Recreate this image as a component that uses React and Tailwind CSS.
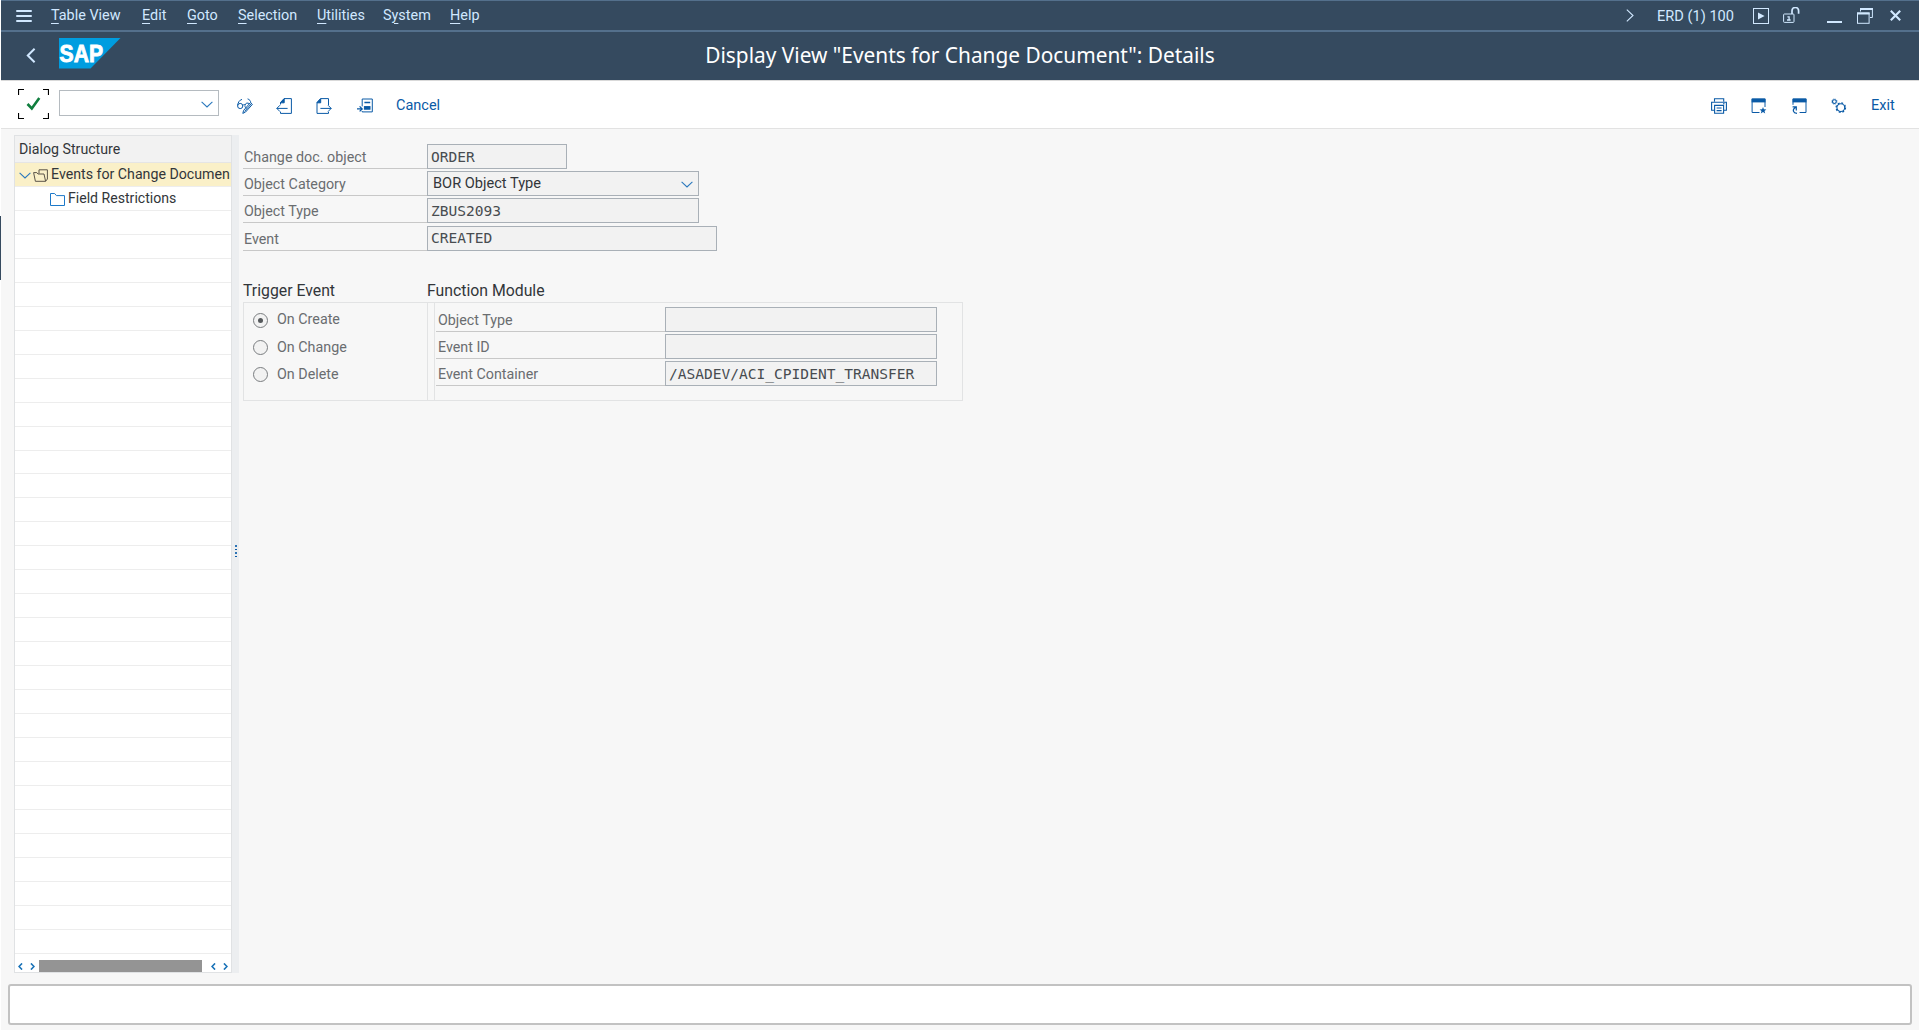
import React from "react";

const menus = [
  ["Table View", 0, "w-[91px]"],
  ["Edit", 0, "w-[45px]"],
  ["Goto", 0, "w-[51px]"],
  ["Selection", 0, "w-[79px]"],
  ["Utilities", 0, "w-[66px]"],
  ["System", 1, "w-[67px]"],
  ["Help", 0, "w-[40px]"],
];

function Chevron({ className, weight = 1.1 }) {
  return (
    <svg className={className} viewBox="0 0 12 7" fill="none" stroke="currentColor" strokeWidth={weight}>
      <path d="M0.6 0.8 L6 6 L11.4 0.8" />
    </svg>
  );
}

function MenuBar() {
  return (
    <div className="flex h-8 items-center border-t border-b-2 border-t-[#54708c] border-b-[#54708c] bg-[#354a5f] text-[#d1e8ff]">
      <svg className="ml-[15px] h-[14px] w-4 shrink-0" viewBox="0 0 16 14" fill="currentColor">
        <rect y="1" width="16" height="2" rx="1" />
        <rect y="6" width="16" height="2" rx="1" />
        <rect y="11" width="16" height="2" rx="1" />
      </svg>
      <div className="ml-[19px] flex text-[14.4px] leading-5">
        {menus.map(([t, u, w]) => (
          <span key={t} className={w + " whitespace-nowrap"}>
            {t.slice(0, u)}
            <span className="underline decoration-1 underline-offset-[3px]">{t[u]}</span>
            {t.slice(u + 1)}
          </span>
        ))}
      </div>
      <div className="ml-auto flex items-center">
        <svg className="h-[13px] w-2" viewBox="0 0 8 13" fill="none" stroke="currentColor" strokeWidth="1.1">
          <path d="M0.8 0.6 L7 6.5 L0.8 12.4" />
        </svg>
        <span className="ml-[23px] w-[96px] whitespace-nowrap text-[14.6px] leading-5">ERD (1) 100</span>
        <svg className="h-4 w-4" viewBox="0 0 16 16" fill="none" stroke="currentColor">
          <rect x="0.5" y="0.5" width="15" height="15" strokeWidth="1" />
          <path d="M5 4.6 L11.6 8 L5 11.4 Z" fill="currentColor" stroke="none" />
        </svg>
        <svg className="-mt-px ml-[14px] h-4 w-[17px]" viewBox="0 0 17 16" fill="none" stroke="currentColor">
          <rect x="0.6" y="7" width="10.4" height="8.4" rx="0.8" strokeWidth="1" />
          <path d="M9 7 V3.8 A3.3 3.3 0 0 1 15.6 3.8 V6.8" strokeWidth="1.7" />
          <path d="M4.4 9.8 H6.1 V12.6 M4 13 H7.6" strokeWidth="1.3" />
        </svg>
        <div className="mt-3 ml-[27px] h-[2px] w-[15px] bg-[#d1e8ff]" />
        <svg className="ml-[15px] h-4 w-4" viewBox="0 0 16 16" fill="none" stroke="currentColor">
          <path d="M3.5 3.5 V1.5 M15.4 1.5 V9.5 H13" strokeWidth="1" />
          <path d="M3 1 H16" strokeWidth="2" />
          <rect x="0.5" y="5" width="11.6" height="10.3" strokeWidth="1" />
          <path d="M0 5.5 H12.6" strokeWidth="2" />
        </svg>
        <svg className="mr-[18px] ml-[17px] h-[11px] w-[11px]" viewBox="0 0 11 11" stroke="currentColor" strokeWidth="2.1">
          <path d="M0.8 0.8 L10.2 10.2 M10.2 0.8 L0.8 10.2" />
        </svg>
      </div>
    </div>
  );
}

function TitleBar() {
  return (
    <div className="grid h-12 grid-cols-[1fr_auto_1fr] bg-[#354a5f]">
      <div className="flex">
        <svg className="mt-4 ml-[25px] h-[15px] w-[10px] text-[#d1e8ff]" viewBox="0 0 10 15" fill="none" stroke="currentColor" strokeWidth="2">
          <path d="M8.6 0.8 L1.8 7.5 L8.6 14.2" />
        </svg>
        <svg className="mt-[6px] ml-[23px] h-[31px] w-[62px]" viewBox="0 0 62 31">
          <path d="M0 0 H61.5 L31.5 30.6 H0 Z" fill="#009de0" />
          <text x="0.6" y="24" fontFamily="Liberation Sans" fontWeight="700" fontSize="24.5" textLength="43.5" lengthAdjust="spacingAndGlyphs" fill="#fff" stroke="#fff" strokeWidth="0.9">SAP</text>
        </svg>
      </div>
      <h1 className="mt-[7px] whitespace-nowrap font-['Noto_Sans'] text-[20.85px] leading-[32px] text-white">
        Display View "Events for Change Document": Details
      </h1>
    </div>
  );
}

function Toolbar() {
  return (
    <div className="flex h-[49px] items-center border-t border-b border-t-[#d9d9d9] border-b-[#e2e2e2] bg-white pt-[2px] text-[#0a5aa6]">
      <svg className="-mt-[2px] ml-[17px] h-[31px] w-[31px]" viewBox="0 0 31 31" fill="none">
        <path d="M0.5 6 V0.5 H6 M25 0.5 H30.5 V6 M30.5 24 V29.5 H25 M6 29.5 H0.5 V24" stroke="#000" strokeWidth="1.2" />
        <path d="M9.5 15 L13.8 19.4 L21.3 9" stroke="#107e3e" strokeWidth="2.6" />
      </svg>
      <div className="mt-[7px] ml-[10px] flex h-[26px] w-[160px] items-center justify-end self-start border border-[#b5bbc0] pr-[5px]">
        <Chevron className="mt-[2px] h-[7px] w-3 text-[#2a78bd]" />
      </div>
      <svg className="ml-[18px] h-4 w-4" viewBox="0 0 16 16" fill="none" stroke="currentColor" strokeWidth="1">
        <circle cx="3.2" cy="8" r="2.6" />
        <path d="M0.6 7.4 C1 4.5 2.4 2 5 1.4 M6 7.4 C6.5 6.4 7.4 6.2 8 7 M8 7.2 C8.4 5 10.8 4.4 12.4 5.8 M10.6 0.9 C12.6 1.4 13.6 3 13.8 4.6 M8 7.4 C7.8 9 8.6 10 9.6 10.2" />
        <path d="M13.4 4.6 L15.4 6.4 L8.6 14 L5.8 15.4 L6.6 12.4 Z M7.6 13.4 L14.4 5.6" />
      </svg>
      <svg className="ml-[23px] h-4 w-4" viewBox="0 0 16 16" fill="none" stroke="currentColor" strokeWidth="1">
        <path d="M4.5 6.5 V4.5 L8 0.6 H15.4 V15.4 H4.5 V13.8" />
        <path d="M4.5 4.8 L8.2 0.8 V4.8 Z" fill="currentColor" />
        <path d="M11.6 10.4 H0.8 M4 7.2 L0.8 10.4 L4 13.6" />
      </svg>
      <svg className="ml-6 h-4 w-4" viewBox="0 0 16 16" fill="none" stroke="currentColor" strokeWidth="1">
        <path d="M12.5 7 V0.6 H4.5 L1 4.5 V15.4 H12.5 V13.8" />
        <path d="M1 4.8 L4.7 0.8 V4.8 Z" fill="currentColor" />
        <path d="M4.4 10.4 H15.2 M12 7.2 L15.2 10.4 L12 13.6" />
      </svg>
      <svg className="ml-[25px] h-4 w-4" viewBox="0 0 16 16" fill="none" stroke="currentColor" strokeWidth="1">
        <path d="M5.2 8.4 V1 H15.3 V13.9 H5.2 V13" />
        <path d="M7.4 4.5 H13.2 M0 10.9 H5 M2.6 8.4 L5.2 10.9 L2.6 13.4" strokeWidth="1.3" />
        <rect x="7.4" y="8.6" width="5.6" height="2.6" fill="currentColor" />
      </svg>
      <span className="ml-[23px] text-[14.5px]">Cancel</span>
      <div className="mr-[24px] ml-auto flex items-center">
        <svg className="h-4 w-4" viewBox="0 0 16 16" fill="none" stroke="currentColor" strokeWidth="1.1">
          <path d="M3.5 3.6 V0.7 H12.7 V3.6 M3.5 12.2 H0.6 V4.3 H15.4 V12.2 H12.7" />
          <path d="M3.6 7.4 H12.6 V15.3 H3.6 Z M5.6 10 H10.6 M5.6 12.6 H10.6 M12 5.8 H13.6" />
        </svg>
        <svg className="ml-6 h-4 w-4" viewBox="0 0 16 16" fill="none" stroke="currentColor" strokeWidth="1">
          <path d="M8.5 14.5 H1.1 V1 H14 V9" />
          <rect x="0.6" y="0.6" width="13.9" height="3.8" fill="currentColor" stroke="none" />
          <path d="M12 9 L12.9 11.3 L15.4 11.4 L13.5 13 L14.2 15.4 L12 14.1 L9.8 15.4 L10.5 13 L8.6 11.4 L11.1 11.3 Z" fill="currentColor" stroke="none" />
        </svg>
        <svg className="ml-6 h-4 w-4" viewBox="0 0 16 16" fill="none" stroke="currentColor" strokeWidth="1">
          <path d="M2 6.8 V1 H15 V14.5 H8.6" />
          <rect x="1.6" y="0.6" width="13.9" height="3.8" fill="currentColor" stroke="none" />
          <path d="M6 15.4 C2.2 15 0.6 11.6 4.8 9.2 M1.6 8.9 H5.3 V12.4" strokeWidth="1.2" />
        </svg>
        <svg className="ml-6 h-4 w-4" viewBox="0 0 16 16" fill="none" stroke="currentColor">
          <circle cx="3.4" cy="3.6" r="1.9" strokeWidth="1.1" />
          <circle cx="3.4" cy="3.6" r="2.6" strokeWidth="0.8" strokeDasharray="1 1.04" />
          <circle cx="9.8" cy="9.6" r="3.9" strokeWidth="1.1" />
          <circle cx="9.8" cy="9.6" r="4.7" strokeWidth="1.3" strokeDasharray="1.85 1.84" />
        </svg>
        <span className="ml-[24px] w-6 text-[14.5px]">Exit</span>
      </div>
    </div>
  );
}

function Tree() {
  return (
    <aside className="flex h-[838px] w-[218px] shrink-0 flex-col border border-[#e0e2e4] bg-white text-[14.2px] text-[#32363a]">
      <div className="h-[27px] shrink-0 border-b border-[#e5e5e5] bg-[#f2f2f2] pl-1 leading-[27px]">Dialog Structure</div>
      <div className="flex h-6 shrink-0 items-center border-b border-[#ededed] bg-[#faf0c8] pl-1 whitespace-nowrap">
        <Chevron className="mt-[2px] h-[7px] w-3 shrink-0 text-[#2a78bd]" />
        <svg className="mt-[2px] ml-[2px] h-[13px] w-[15px] shrink-0" viewBox="0 0 15 13" fill="none" stroke="#5a5348" strokeWidth="1">
          <path d="M2.4 12.3 L0.6 3.6 H3.8 L5 5 H11 L12.6 12.3 Z M6 4.6 V0.8 H14.4 V10 L12.6 12.3" />
        </svg>
        <span className="ml-[3px]">Events for Change Documen</span>
      </div>
      <div className="flex h-6 shrink-0 items-center border-b border-[#ededed] pl-[35px]">
        <svg className="mt-[2px] h-[13px] w-[15px]" viewBox="0 0 15 13" fill="none" stroke="#1d79c9" strokeWidth="1">
          <path d="M0.5 12.5 V0.5 H4.6 L6.4 2.6 H14.5 V12.5 Z" />
        </svg>
        <span className="ml-[3px] text-[14.1px]">Field Restrictions</span>
      </div>
      {Array.from({ length: 31 }, (_, i) => (
        <div key={i} className="h-[23.96px] shrink-0 border-b border-[#ededed]" />
      ))}
      <div className="mt-auto flex h-3 items-center text-[#1a73b8]">
        <Chevron className="ml-[2px] h-[5px] w-[7px] rotate-90" weight={2.6} />
        <Chevron className="ml-[5px] h-[5px] w-[7px] -rotate-90" weight={2.6} />
        <div className="ml-[3px] h-3 w-[163px] bg-[#949494]" />
        <Chevron className="ml-[8px] h-[5px] w-[7px] rotate-90" weight={2.6} />
        <Chevron className="ml-[5px] h-[5px] w-[7px] -rotate-90" weight={2.6} />
      </div>
    </aside>
  );
}

function Field({ label, value, box, labelW, mono = true, drop }) {
  return (
    <div className="flex h-[27.2px]">
      <div className={labelW + " h-[25px] border-b border-[#c8c8c8] text-[14.3px] leading-[26px] text-[#6a6d70]"}>{label}</div>
      <div className={box + " flex h-[25px] items-center justify-between border border-[#a9b0b7] bg-[#f2f2f2] pr-[5px] pl-[3px] text-[#32363a]"}>
        <span className={mono ? "font-['DejaVu_Sans_Mono',monospace] text-[14.55px] text-[#484c50]" : "pl-[2px] text-[14.6px]"}>{value}</span>
        {drop && <Chevron className="mt-px h-[7px] w-3 text-[#2a78bd]" />}
      </div>
    </div>
  );
}

function Radio({ label, on }) {
  return (
    <div className="flex h-[27.2px] items-center">
      <span className="flex h-[15px] w-[15px] items-center justify-center rounded-full border border-[#7a7d80] bg-[#f2f2f2]">
        {on && <span className="h-[5px] w-[5px] rounded-full bg-[#55585b]" />}
      </span>
      <span className="-mt-px ml-[9px] text-[14.3px] text-[#6a6d70]">{label}</span>
    </div>
  );
}

export default function App() {
  return (
    <div className="flex h-[1030px] w-[1920px] overflow-hidden bg-[#f7f7f7] font-[Roboto,sans-serif]">
      <div className="w-px shrink-0 bg-white pt-[216px]">
        <div className="h-16 bg-[#354a5f]" />
      </div>
      <div className="w-[1918px] shrink-0">
        <MenuBar />
        <TitleBar />
        <Toolbar />
        <div className="flex pt-[6px] pl-[13px]">
          <Tree />
          <div className="flex h-[838px] w-[7px] flex-col items-center justify-center gap-[2px] bg-[#eceef0] pb-[6px]">
            <div className="h-[2px] w-[2px] bg-[#2d74b5]" />
            <div className="h-px w-[2px] bg-[#0a5aa6]" />
            <div className="h-[2px] w-[2px] bg-[#2d74b5]" />
            <div className="h-px w-[2px] bg-[#0a5aa6]" />
          </div>
          <main className="pt-[9px] pl-1">
            <div className="[&>div>div:first-child]:pl-px">
              <Field labelW="w-[184px]" label="Change doc. object" value="ORDER" box="w-[140px]" />
              <Field labelW="w-[184px]" label="Object Category" value="BOR Object Type" box="w-[272px]" mono={false} drop />
              <Field labelW="w-[184px]" label="Object Type" value="ZBUS2093" box="w-[272px]" />
              <Field labelW="w-[184px]" label="Event" value="CREATED" box="w-[290px]" />
            </div>
            <div className="mt-[26px] flex">
              <section className="w-[185px]">
                <h2 className="h-[22.2px] text-[15.8px] leading-[23px] text-[#32363a]">Trigger Event</h2>
                <div className="mt-[1px] h-[99px] border border-[#e2e3e4] pt-[4px] pl-[9px]">
                  <Radio label="On Create" on />
                  <Radio label="On Change" />
                  <Radio label="On Delete" />
                </div>
              </section>
              <section className="w-[535px]">
                <h2 className="-ml-px h-[22.2px] text-[15.8px] leading-[23px] text-[#32363a]">Function Module</h2>
                <div className="mt-[1px] flex h-[99px] border-y border-r border-[#e2e3e4]">
                  <div className="w-[7px] border-r border-[#e2e3e4]" />
                  <div className="pt-[4px] pl-px [&>div>div:first-child]:pl-[2px]">
                    <Field labelW="w-[229px]" label="Object Type" value="" box="w-[272px]" />
                    <Field labelW="w-[229px]" label="Event ID" value="" box="w-[272px]" />
                    <Field labelW="w-[229px]" label="Event Container" value="/ASADEV/ACI_CPIDENT_TRANSFER" box="w-[272px]" />
                  </div>
                </div>
              </section>
            </div>
          </main>
        </div>
        <div className="mx-[7px] mt-[11px] h-[41px] rounded-[3px] border-2 border-[#c2c2c2] bg-white" />
      </div>
      <div className="w-px bg-white" />
    </div>
  );
}
